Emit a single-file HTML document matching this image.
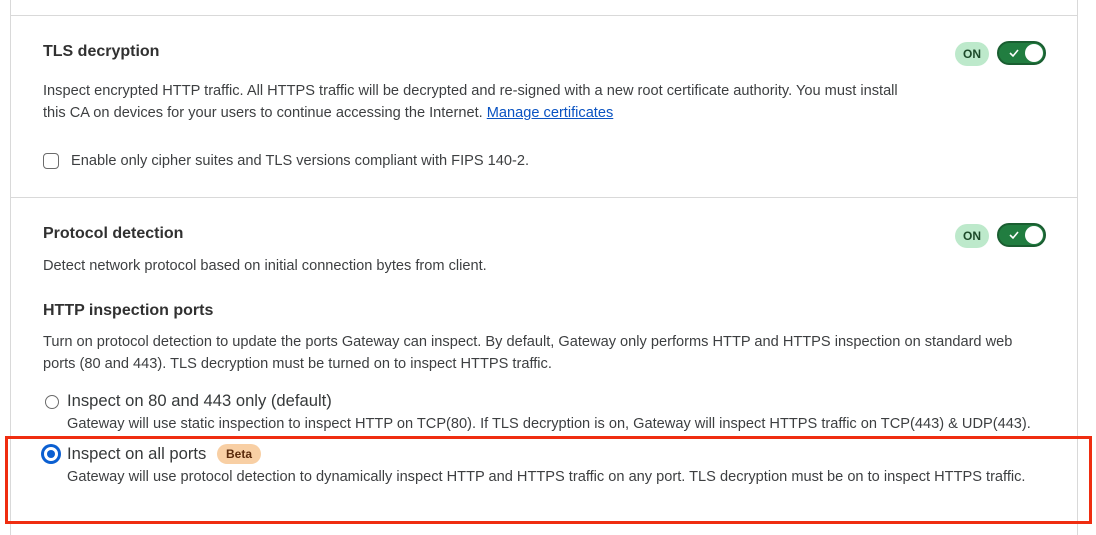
<!DOCTYPE html>
<html><head><meta charset="utf-8"><style>
*{margin:0;padding:0;box-sizing:border-box}
body{width:1096px;height:535px;background:#fff;font-family:"Liberation Sans",Arial,sans-serif;color:#36393a;position:relative;overflow:hidden}
.a{position:absolute;white-space:nowrap}
.vl{position:absolute;top:0;width:1px;height:535px;background:#d9d9d9}
.hl{position:absolute;left:11px;width:1066px;height:1px;background:#d9d9d9}
h3{font-size:16px;font-weight:bold;color:#313131}
.t{font-size:14.6px;line-height:22px;color:#3d3f41}
.t2{font-size:14.6px;color:#3d3f41}
.on{position:absolute;width:34px;height:24px;border-radius:12px;background:#bde9cb;color:#1d4a2a;font-size:12px;font-weight:bold;text-align:center;line-height:24px}
.sw{position:absolute;width:49px;height:24px;border-radius:12px;background:#217d40;border:2px solid #1a5e31}
.sw .k{position:absolute;right:1px;top:1px;width:18px;height:18px;border-radius:50%;background:#fff}
.sw svg{position:absolute;left:9px;top:5px}
</style></head><body>
<div class="vl" style="left:10px"></div>
<div class="vl" style="left:1077px"></div>
<div class="hl" style="top:15px"></div>
<div class="hl" style="top:197px"></div>

<h3 class="a" style="left:43px;top:43px">TLS decryption</h3>
<div class="on" style="left:955px;top:42px">ON</div>
<div class="sw" style="left:997px;top:41px"><svg width="12" height="10" viewBox="0 0 12 10"><path d="M2 5l3 3 5-6" stroke="#fff" stroke-width="1.6" fill="none"/></svg><div class="k"></div></div>
<div class="a t" style="left:43px;top:80px">Inspect encrypted HTTP traffic. All HTTPS traffic will be decrypted and re-signed with a new root certificate authority. You must install<br>this CA on devices for your users to continue accessing the Internet. <span style="color:#0a53c2;text-decoration:underline">Manage certificates</span></div>
<div class="a" style="left:43px;top:153px;width:16px;height:16px;border:1.5px solid #6b6b6b;border-radius:4px"></div>
<div class="a t2" style="left:71px;top:153px">Enable only cipher suites and TLS versions compliant with FIPS 140-2.</div>

<h3 class="a" style="left:43px;top:225px">Protocol detection</h3>
<div class="on" style="left:955px;top:224px">ON</div>
<div class="sw" style="left:997px;top:223px"><svg width="12" height="10" viewBox="0 0 12 10"><path d="M2 5l3 3 5-6" stroke="#fff" stroke-width="1.6" fill="none"/></svg><div class="k"></div></div>
<div class="a t2" style="left:43px;top:258px">Detect network protocol based on initial connection bytes from client.</div>

<h3 class="a" style="left:43px;top:302px">HTTP inspection ports</h3>
<div class="a t" style="left:43px;top:331px">Turn on protocol detection to update the ports Gateway can inspect. By default, Gateway only performs HTTP and HTTPS inspection on standard web<br>ports (80 and 443). TLS decryption must be turned on to inspect HTTPS traffic.</div>

<div class="a" style="left:45px;top:395px;width:14px;height:14px;border:1px solid #6b6b6b;border-radius:50%"></div>
<div class="a" style="left:67px;top:391px;font-size:16.6px;color:#36393a">Inspect on 80 and 443 only (default)</div>
<div class="a t2" style="left:67px;top:416px">Gateway will use static inspection to inspect HTTP on TCP(80). If TLS decryption is on, Gateway will inspect HTTPS traffic on TCP(443) &amp; UDP(443).</div>

<div class="a" style="left:42px;top:445px;width:18px;height:18px;border-radius:50%;background:#fff;border:2.5px solid #0b5fd1;box-shadow:0 0 0 1px #0b5fd1"></div>
<div class="a" style="left:47px;top:450px;width:8px;height:8px;border-radius:50%;background:#0b5fd1"></div>
<div class="a" style="left:67px;top:444px;font-size:16.6px;color:#36393a">Inspect on all ports</div>
<div class="a" style="left:217px;top:444px;width:44px;height:20px;border-radius:10px;background:#f8cfa4;color:#5a2a0b;font-size:12px;font-weight:bold;text-align:center;line-height:20px">Beta</div>
<div class="a t2" style="left:67px;top:469px">Gateway will use protocol detection to dynamically inspect HTTP and HTTPS traffic on any port. TLS decryption must be on to inspect HTTPS traffic.</div>

<div class="a" style="left:5px;top:436px;width:1087px;height:88px;border:3px solid #ef2d10"></div>
</body></html>
